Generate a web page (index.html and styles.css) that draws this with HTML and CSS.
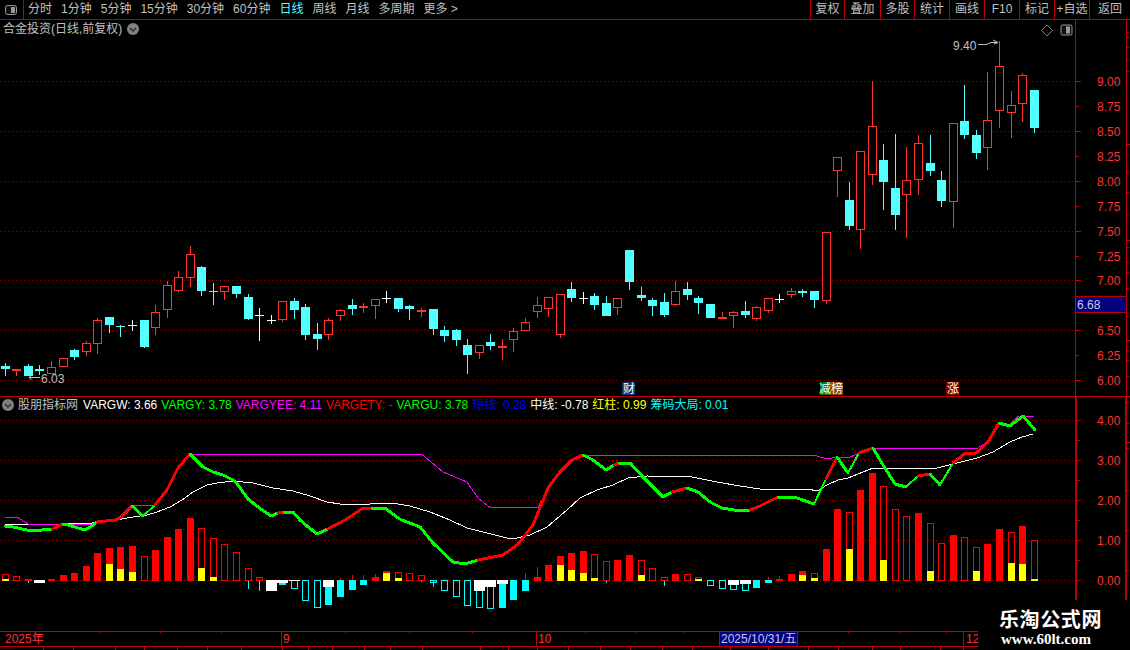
FILE: index.html
```html
<!DOCTYPE html>
<html lang="zh-CN">
<head>
<meta charset="utf-8">
<title>合金投资 日线</title>
<link rel="stylesheet" href="styles.css">
</head>
<body>
<div class="app">
  <header class="toolbar">
    <div class="tb-icon">
      <svg class="panel-icon" viewBox="0 0 12 10" width="12" height="10"><rect class="pi-frame" x="0.5" y="0.5" width="11" height="9" rx="2"/><rect class="pi-fill" x="6" y="2" width="4" height="6"/></svg>
    </div>
    <nav class="periods">
      <span>分时</span><span>1分钟</span><span>5分钟</span><span>15分钟</span><span>30分钟</span><span>60分钟</span><span class="active">日线</span><span>周线</span><span>月线</span><span>多周期</span><span>更多 &gt;</span>
    </nav>
    <nav class="actions">
      <span class="tb-btn w34">复权</span><span class="tb-btn w36">叠加</span><span class="tb-btn w34">多股</span><span class="tb-btn">统计</span><span class="tb-btn">画线</span><span class="tb-btn">F10</span><span class="tb-btn">标记</span><span class="tb-btn">+自选</span><span class="tb-btn w41">返回</span>
    </nav>
  </header>

  <section class="panel price-panel">
    <svg id="price-chart" class="chart" viewBox="0 20 1130 377" width="1130" height="377"></svg>
    <div class="panel-title">
      <span>合金投资(日线,前复权)</span>
      <svg class="chev" viewBox="0 0 12 12" width="12" height="12"><circle class="chev-bg" cx="6" cy="6" r="6"/><path class="chev-mark" d="M3 5l3 3 3-3"/></svg>
    </div>
  </section>

  <section class="panel indicator-panel">
    <svg id="indicator-chart" class="chart" viewBox="0 397 1130 234" width="1130" height="234"></svg>
    <div class="legend">
      <svg class="chev" viewBox="0 0 12 12" width="12" height="12"><circle class="chev-bg" cx="6" cy="6" r="6"/><path class="chev-mark" d="M3 5l3 3 3-3"/></svg>
      <span class="name">股朋指标网</span>
      <span class="white">VARGW: 3.66</span>
      <span class="green">VARGY: 3.78</span>
      <span class="magenta">VARGYEE: 4.11</span>
      <span class="red">VARGETY: -</span>
      <span class="green">VARGU: 3.78</span>
      <span class="blue">短线: 0.28</span>
      <span class="white">中线: -0.78</span>
      <span class="yellow">红柱: 0.99</span>
      <span class="cyan">筹码大局: 0.01</span>
    </div>
  </section>

  <svg id="date-axis" class="chart" viewBox="0 631 1130 19" width="1130" height="19"></svg>

  <aside class="watermark">
    <div class="wm-title">乐淘公式网</div>
    <div class="wm-url">www.60lt.com</div>
  </aside>
</div>
<script src="chart.js"></script>
</body>
</html>
```
FILE: styles.css
```css
* { box-sizing: border-box; }
html, body { margin: 0; padding: 0; background: #000; }
body {
  font-family: "Liberation Sans", "Noto Sans CJK SC", sans-serif;
  font-size: 12px;
  color: #c0c0c0;
}
.app {
  position: relative;
  width: 1130px;
  height: 650px;
  overflow: hidden;
  background: #000;
}
.toolbar {
  display: flex;
  align-items: stretch;
  height: 20px;
  border-bottom: 1px solid #c00000;
  line-height: 19px;
}
.tb-icon {
  display: flex;
  align-items: center;
  justify-content: center;
  width: 24px;
  padding: 1px 1px 0 0;
  border-right: 1px solid #c00000;
}
.panel-icon { display: block; }
.pi-frame { fill: #111; stroke: #9a9a9a; }
.pi-fill { fill: #9a9a9a; }
.periods {
  display: flex;
  gap: 9px;
  padding-left: 4px;
}
.periods .active { color: #54ffff; }
.actions {
  display: flex;
  margin-left: auto;
}
.tb-btn {
  width: 35px;
  border-left: 1px solid #c00000;
  text-align: center;
  white-space: nowrap;
}
.tb-btn.w34 { width: 34px; }
.tb-btn.w36 { width: 36px; }
.tb-btn.w41 { width: 41px; }

.panel { position: relative; }
.chart { display: block; }
.price-panel { height: 377px; }
.indicator-panel { height: 234px; }

.panel-title {
  position: absolute;
  top: 0;
  left: 3px;
  display: flex;
  align-items: center;
  gap: 5px;
  height: 18px;
  line-height: 18px;
  white-space: nowrap;
}
.legend {
  position: absolute;
  top: 0;
  left: 2px;
  display: flex;
  align-items: center;
  gap: 4px;
  height: 16px;
  line-height: 16px;
  white-space: nowrap;
}
.chev { display: block; }
.chev-bg { fill: #808080; }
.chev-mark { fill: none; stroke: #2a2a2a; stroke-width: 1.4; }
.legend .name { color: #c0c0c0; margin-right: 1px; }
.white { color: #fff; }
.green { color: #00ff00; }
.magenta { color: #ff00ff; }
.red { color: #ff0000; }
.blue { color: #0000ff; }
.yellow { color: #ffff00; }
.cyan { color: #00ffff; }

.watermark {
  position: absolute;
  right: 0;
  bottom: 0;
  width: 152px;
  height: 50px;
  background: #000;
  color: #fff;
  padding: 7px 0 0 21px;
  font-weight: 700;
}
.wm-title {
  font-family: "Noto Sans CJK SC", sans-serif;
  font-size: 20px;
  line-height: 24px;
  letter-spacing: 0.6px;
  white-space: nowrap;
}
.wm-url {
  font-family: "Liberation Serif", serif;
  font-size: 15px;
  line-height: 16px;
  margin-left: 2px;
  white-space: nowrap;
}

/* chart drawing */
.crisp { shape-rendering: crispEdges; }
.line-frame { stroke: #c00000; stroke-width: 1; fill: none; }
.line-frame2 { stroke: #c00000; stroke-width: 2; fill: none; }
.line-grid { stroke: #900000; stroke-width: 1; stroke-dasharray: 1 3; }
.candle-red { fill: #000; stroke: #ff3232; }
.candle-redfill { fill: #ff3232; }
.candle-cyan { fill: #54ffff; }
.candle-white { fill: #fff; }
.bar-red { fill: #ff0000; }
.bar-redo { fill: none; stroke: #ff0000; }
.bar-cyan { fill: #00ffff; }
.bar-cyano { fill: none; stroke: #00ffff; }
.bar-yellow { fill: #ffff00; }
.bar-white { fill: #fff; }
.tx { font-family: "Liberation Sans", "Noto Sans CJK SC", sans-serif; font-size: 12px; }
.tx-red { fill: #ff3232; }
.tx-gray { fill: #c0c0c0; }
.tx-pale { fill: #c8c8e8; }
.tx-white { fill: #fff; }
.navy { fill: #000080; }
.arrow { stroke: #c0c0c0; fill: none; stroke-width: 1; }
.diamond { stroke: #808080; fill: none; }
.m-navy { fill: #0a3a6e; }
.m-green { fill: #007f00; }
.m-brown { fill: #8a4a00; }
.m-maroon { fill: #800000; }
.ln-white { stroke: #fff; stroke-width: 1; fill: none; }
.ln-magenta { stroke: #ff00ff; stroke-width: 1; fill: none; }
.ln-g { stroke: #00ff00; stroke-linecap: round; }
.ln-r { stroke: #ff0000; stroke-linecap: round; }
```
FILE: chart.js
```js
(function () {
  var xAt = function (i) { return Math.floor(5.3 + 11.56 * i); };

  /* [type, bodyTop, bodyBottom, wickTop, wickBottom] r=hollow red, R=solid red, c=cyan, w=white cross */
  var candles = [
    ['c',366,369,363,376],['R',369,371,369,376],['c',366,376,364,376],['c',369,371,365,375],
    ['r',367,374,361,374],['r',358,367,358,367],['c',350,357,349,360],['r',343,352,341,356],
    ['r',320,344,318,354],['c',317,325,317,333],['c',326,327,325,337],['w',325,326,320,331],
    ['c',320,347,320,348],['r',312,328,305,335],['r',285,310,281,318],['r',277,291,271,292],
    ['r',254,278,246,287],['c',267,291,266,296],['c',291,292,283,305],['r',286,292,286,300],
    ['c',286,294,286,298],['c',297,319,294,320],['w',315,316,308,341],['w',320,321,315,324],
    ['r',301,320,301,322],['c',301,310,298,319],['c',307,335,304,340],['c',334,339,323,350],
    ['r',320,335,318,340],['r',310,316,309,321],['c',305,309,299,315],['R',306,308,303,313],
    ['r',299,306,299,319],['w',298,299,291,303],['c',298,309,298,312],['c',306,309,305,320],
    ['R',310,312,308,317],['c',309,329,309,335],['c',330,336,326,342],['c',330,340,329,346],
    ['c',345,355,339,374],['r',345,353,345,359],['c',342,346,334,350],['R',346,348,339,360],
    ['r',331,340,328,352],['r',322,331,318,331],['r',305,312,297,318],['r',297,309,297,317],
    ['r',294,335,294,338],['c',289,298,282,302],['w',298,299,292,304],['c',296,305,293,310],
    ['c',303,316,296,316],['r',298,308,298,315],['c',250,282,250,290],['c',295,298,287,301],
    ['c',300,306,298,316],['c',302,315,293,317],['r',291,305,281,306],['c',289,295,282,300],
    ['c',298,303,296,314],['c',304,318,304,318],['R',317,319,312,319],['r',312,316,311,328],
    ['c',311,315,301,318],['r',307,319,306,321],['r',298,311,298,313],['w',299,300,294,303],
    ['r',291,295,288,298],['c',291,293,289,297],['c',291,300,291,308],['r',232,301,232,304],
    ['r',157,171,157,197],['c',200,226,182,230],['r',151,230,151,249],['r',126,175,81,185],
    ['c',160,182,144,210],['c',188,215,134,230],['r',180,195,147,238],['r',143,180,135,195],
    ['c',163,171,135,176],['c',180,201,171,207],['r',123,202,123,228],['c',121,135,85,139],
    ['c',135,153,130,159],['r',120,148,72,170],['r',66,111,41,128],['r',105,113,91,138],
    ['r',75,104,73,122],['c',90,128,90,133]
  ];

  /* [kind, value, yellowTop, whiteBottom, redWickTop, cyanWickBottom] s/h red solid/hollow (value=top), S/H cyan solid/hollow (value=bottom) */
  var bars = [
    ['h',574,579],['h',576],['s',579,0,0,0,583],['w',583],['s',579],['s',575],['s',573],['s',566],
    ['s',553],['s',548,564],['s',547,569],['s',546,572],['h',556],['s',550],['s',537],['s',529],
    ['s',518],['h',528,568],['h',538,577],['h',544],['h',552],['h',568,0,0,0,589],['h',577,0,0,0,591],
    ['w',591],['S',585,0,583],['H',589,0,581],['H',601],['H',608],['S',605,0,587],['S',597,0,0,578],
    ['S',590,0,0,575],['S',585,0,0,575],['s',577,0,0,574],['s',571,573],['h',572,578],['h',573],
    ['h',575,0,0,0,582],['H',583,0,0,0,587],['H',591],['H',597],['H',606],['H',608,0,591],['H',609,0,587],
    ['S',608,0,584],['S',600],['S',591,0,0,573],['s',577,0,0,567],['s',565],['s',556,565],['s',553,570],
    ['s',551,573],['h',554,578],['h',561,0,0,0,583],['s',560],['s',555],['h',560,575],['h',568],
    ['h',577,0,0,0,586],['s',574],['h',574],['h',577,579],['H',586],['H',589],['H',590,0,585],['H',591,0,584],
    ['S',588],['S',583,0,0,577],['s',579,0,0,576],['s',574],['s',571,575],['h',573,578],['s',549],
    ['s',509],['h',512,549],['s',490],['s',473],['h',486,560],['h',509],['h',516],['s',513],['h',523,571],
    ['h',543],['s',535],['h',537],['h',547,571],['s',544],['s',529],['h',532,563],['s',526,564],['h',540,579]
  ];

  var thick = [
    ['g',[[5,526],[13,527],[27,530],[42,530],[52,529]]],
    ['r',[[52,529],[63,524]]],
    ['g',[[63,524],[68,525],[85,530],[92,526],[97,522]]],
    ['r',[[97,522],[115,520],[120,518],[132,506]]],
    ['g',[[132,506],[143,516],[155,505]]],
    ['r',[[155,505],[167,490],[178,468],[190,454]]],
    ['g',[[190,454],[203,467],[213,472],[223,475],[235,481],[248,499],[258,507],[271,516],[278,513]]],
    ['r',[[278,513],[284,512]]],
    ['g',[[284,512],[293,512],[300,520],[307,526],[317,534],[328,529]]],
    ['r',[[328,529],[345,520],[363,508],[372,508]]],
    ['g',[[372,508],[385,508],[398,518],[402,520],[420,527],[433,543],[453,562],[465,564],[478,560]]],
    ['r',[[478,560],[503,555],[517,545],[527,533],[533,525],[548,488],[560,472],[572,460],[583,455]]],
    ['g',[[583,455],[593,460],[606,470],[614,465]]],
    ['r',[[614,465],[619,463]]],
    ['g',[[619,463],[630,463],[643,477],[663,497],[672,492]]],
    ['r',[[672,492],[687,488]]],
    ['g',[[687,488],[698,492],[710,502],[722,508],[740,511],[750,510]]],
    ['r',[[750,510],[760,506],[778,497]]],
    ['g',[[778,497],[797,498],[814,504],[826,479]]],
    ['r',[[826,479],[837,457]]],
    ['g',[[837,457],[848,473],[859,453]]],
    ['r',[[859,453],[873,448]]],
    ['g',[[873,448],[883,465],[895,484],[906,487],[918,476]]],
    ['r',[[918,476],[930,474]]],
    ['g',[[930,474],[940,485],[953,463]]],
    ['r',[[953,463],[964,454],[976,453],[988,442],[999,423]]],
    ['g',[[999,423],[1010,426],[1023,416],[1035,430]]]
  ];
  var magenta = [[5,517],[17,517],[28,524],[92,524],[97,522],[115,520],[120,518],[132,506],[155,505],[167,490],[178,468],[190,454.5],[422,454.5],[443,472],[467,482],[478,498],[490,507.5],[538,507.5],[548,488],[560,472],[572,460],[583,455.5],[815,455.5],[827,459],[837,457],[850,457],[860,453],[873,448.5],[977,448.5],[990,440],[999,424],[1010,424],[1018,416.5],[1034,416.5]];
  var white = [[5,524],[60,524],[92,523],[122,519],[133,517],[147,515],[157,512],[170,507],[182,500],[193,492],[207,485],[217,483],[233,481],[253,483],[273,488],[293,491],[310,496],[327,502],[340,504],[370,504],[392,503],[410,506],[430,512],[450,520],[467,528],[487,533],[507,538],[517,538],[530,535],[547,527],[567,510],[580,498],[597,490],[613,485],[628,478],[647,476],[692,477],[717,482],[740,486],[760,489],[808,489],[817,491],[827,485],[838,480],[848,478],[873,468],[900,468],[917,468],[937,468],[957,463],[977,458],[993,452],[1010,442],[1022,437],[1033,434]];

  function rect(c, x, y, w, h) { return '<rect class="' + c + '" x="' + x + '" y="' + y + '" width="' + w + '" height="' + h + '"/>'; }
  function hline(c, x1, x2, y) { return '<line class="' + c + '" x1="' + x1 + '" x2="' + x2 + '" y1="' + y + '" y2="' + y + '"/>'; }
  function vline(c, x, y1, y2) { return '<line class="' + c + '" x1="' + x + '" x2="' + x + '" y1="' + y1 + '" y2="' + y2 + '"/>'; }
  function text(c, x, y, t) { return '<text class="tx ' + c + '" x="' + x + '" y="' + y + '">' + t + '</text>'; }
  function poly(c, pts) { return '<polyline class="' + c + '" points="' + pts.map(function (p) { return p.join(','); }).join(' ') + '"/>'; }
  function g(cls, s) { return '<g class="' + cls + '">' + s + '</g>'; }

  /* ---------- price panel ---------- */
  var s = '', crisp = '', grid = '';
  [81, 131, 181, 231, 280, 330, 380].forEach(function (y) { grid += hline('line-grid', 0, 1075, y + 0.5); });

  candles.forEach(function (c, i) {
    var x = xAt(i), t = c[0], top = c[1], bot = c[2], wt = c[3], wb = c[4];
    var wickClass = (t === 'r' || t === 'R') ? 'candle-redfill' : (t === 'w' ? 'candle-white' : 'candle-cyan');
    if (wb > wt) crisp += rect(wickClass, x, wt, 1, wb - wt);
    if (t === 'r') {
      crisp += rect('candle-red', x - 3.5, top + 0.5, 8, bot - top - 1);
    } else {
      crisp += rect(wickClass, x - 4, top, 9, bot - top);
    }
  });

  // axis frame + ticks
  crisp += vline('line-frame', 1075.5, 20, 397) + vline('line-frame', 1126.5, 20, 397);
  crisp += hline('line-frame', 0, 1130, 396.5);
  [['9.00',81],['8.75',106],['8.50',131],['8.25',156],['8.00',181],['7.75',206],['7.50',231],['7.25',256],['7.00',280],['6.50',330],['6.25',355],['6.00',380]].forEach(function (p) {
    var major = p[0].slice(-2) === '00' || p[0].slice(-2) === '50';
    crisp += hline('line-frame', 1076, major ? 1081 : 1079, p[1] + 0.5);
    s += text('tx-red', 1097, p[1] + 4.5, p[0]);
  });
  [32,37,47,59,71,144,172,192,214,240,247,262,272,288,316,340,350,360,376].forEach(function (y) {
    var long = (y === 144 || y === 240 || y === 340);
    crisp += hline('line-frame', 1127, long ? 1130 : 1129, y + 0.5);
  });
  // current price flag
  crisp += rect('navy', 1076, 297, 50, 15);
  crisp += hline('line-frame', 1075, 1127, 296.5) + hline('line-frame', 1075, 1127, 312.5);
  s += text('tx-pale', 1077, 309, '6.68');

  // high / low annotation
  s += text('tx-gray', 953, 50, '9.40');
  s += '<path class="arrow" d="M978 44.5h8l5-2h6M993 40l5 2.5-4 1.5"/>';
  s += text('tx-gray', 41, 383, '6.03');
  s += '<path class="arrow" d="M40 377.5H29M32 375l-3 2.5 3 3"/>';

  // top-right icons
  s += '<path class="diamond" d="M1047 25l5.5 5.5-5.5 5.5-5.5-5.5z"/>';
  s += '<rect class="pi-frame" x="1061" y="25" width="11" height="10" rx="1.5"/><rect class="pi-fill" x="1066" y="26.5" width="4" height="7"/>';

  // markers
  crisp += rect('m-navy', 622, 382, 13, 13) + rect('m-green', 820, 382, 10, 13) + rect('m-brown', 830, 382, 13, 13) + rect('m-maroon', 946, 382, 13, 13);
  s += text('tx-white', 623, 393, '财') + text('tx-white', 819, 393, '减') + text('tx-white', 831, 393, '榜') + text('tx-white', 947, 393, '涨');

  document.getElementById('price-chart').innerHTML = grid + g('crisp', crisp) + s;

  /* ---------- indicator panel ---------- */
  var t = '', c2 = '', grid2 = '';
  [420, 460, 500, 540, 580].forEach(function (y) { grid2 += hline('line-grid', 0, 1075, y + 0.5); });

  bars.forEach(function (b, i) {
    var x = xAt(i), k = b[0], v = b[1], yel = b[2], wh = b[3], wt = b[4], wb = b[5];
    if (wt) c2 += rect('bar-red', x, wt, 1, 580 - wt);
    if (wb) c2 += rect('bar-cyan', x, 580, 1, wb - 580);
    if (k === 's') c2 += rect('bar-red', x - 3, v, 7, 581 - v);
    if (k === 'h') c2 += rect('bar-redo', x - 2.5, v + 0.5, 6, 580 - v);
    if (k === 'S') c2 += rect('bar-cyan', x - 3, 580, 7, v - 580);
    if (k === 'H') c2 += rect('bar-cyano', x - 2.5, 580.5, 6, v - 581);
    if (k === 'w') c2 += rect('bar-white', x - 5, 580, 11, v - 580);
    if (yel) c2 += rect('bar-yellow', x - 3, yel, 7, 581 - yel);
    if (wh) c2 += rect('bar-white', x - 5, 580, 11, wh - 580);
  });

  c2 += poly('ln-white', white) + poly('ln-magenta', magenta);
  thick.forEach(function (seg) {
    var pts = seg[1], cls = seg[0] === 'g' ? 'ln-g' : 'ln-r';
    for (var i = 0; i < pts.length - 1; i++) {
      var a = pts[i], b = pts[i + 1];
      var thin = seg[0] === 'g' && (a[1] - b[1]) / (b[0] - a[0]) > 0.8;
      c2 += '<line class="' + cls + '" stroke-width="' + (thin ? 2 : 3) + '" x1="' + a[0] + '" y1="' + a[1] + '" x2="' + b[0] + '" y2="' + b[1] + '"/>';
    }
  });

  // axis
  c2 += vline('line-frame2', 1076, 397, 631) + vline('line-frame2', 1126, 397, 631);
  [['4.00',420],['3.00',460],['2.00',500],['1.00',540],['0.00',580]].forEach(function (p) {
    c2 += hline('line-frame', 1077, 1081, p[1] + 0.5);
    t += text('tx-red', 1097, p[1] + 4.5, p[0]);
  });
  [440, 480, 520, 560, 600].forEach(function (y) { c2 += hline('line-frame', 1077, 1080, y + 0.5); });
  [402, 423, 442, 448, 490, 530, 570].forEach(function (y) {
    c2 += hline('line-frame', 1127, y === 442 ? 1130 : 1129, y + 0.5);
  });

  document.getElementById('indicator-chart').innerHTML = grid2 + g('crisp', c2) + t;

  /* ---------- date axis ---------- */
  var d = '', c3 = '';
  c3 += hline('line-frame', 0, 978, 631);
  c3 += hline('line-frame', 0, 978, 646.5);
  [281, 536, 963].forEach(function (x) { c3 += vline('line-frame', x + 0.5, 631, 646); });
  [100, 160, 221, 345, 409, 472, 585, 635, 683, 848, 900, 946].forEach(function (x) { c3 += vline('line-frame', x + 0.5, 631, 633); });
  [43, 73, 115, 144, 177, 207, 241, 282, 308, 332, 364, 390, 422, 480, 508, 537, 568, 600, 630, 662, 692, 730, 768, 808, 838, 872, 900, 940, 963].forEach(function (x) {
    c3 += vline('line-frame', x + 0.5, 647, 650);
  });
  c3 += rect('navy', 720, 632, 77, 14);
  c3 += vline('line-frame', 719.5, 631, 646) + vline('line-frame', 797.5, 631, 646);
  d += text('tx-red', 5, 643, '2025年') + text('tx-red', 283, 643, '9') + text('tx-red', 538, 643, '10') + text('tx-red', 966, 643, '12');
  d += text('tx-pale', 721, 643, '2025/10/31/五');
  document.getElementById('date-axis').innerHTML = g('crisp', c3) + d;
})();
```
